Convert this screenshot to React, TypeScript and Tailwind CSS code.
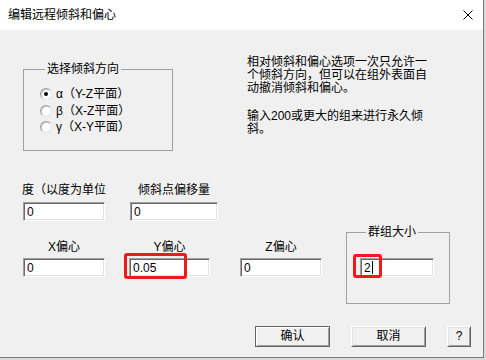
import React from 'react';

const FONT = "font-[family-name:'Liberation_Sans','Noto_Sans_CJK_SC',sans-serif]";

const Field: React.FC<{ value: string; width: string; cursor?: boolean }> = ({ value, width, cursor }) => (
  <div
    className={`flex h-[19px] items-center border border-t-[#a0a0a0] border-l-[#a0a0a0] border-r-white border-b-white bg-white pl-[3px] text-[12px] leading-[14px] text-black shadow-[inset_1px_1px_0_#696969,inset_-1px_-1px_0_#e3e3e3] ${width}`}
  >
    <span>{value}</span>
    {cursor && <span className="ml-[1px] h-[13px] w-[1px] bg-black" />}
  </div>
);

const Radio: React.FC<{ checked?: boolean; label: string }> = ({ checked, label }) => (
  <div className="flex h-[16.5px] items-center">
    <span className="flex h-[12px] w-[12px] items-center justify-center rounded-full border border-t-[#a0a0a0] border-l-[#a0a0a0] border-r-[#e3e3e3] border-b-[#e3e3e3] bg-white shadow-[inset_1px_1px_0_#c8c8c8]">
      {checked && <span className="h-[4px] w-[4px] rounded-full bg-black" />}
    </span>
    <span className="ml-[4px] text-[12px] leading-[14px]">{label}</span>
  </div>
);

const Btn: React.FC<{ children: React.ReactNode; width: string; primary?: boolean }> = ({ children, width, primary }) => (
  <button
    className={
      primary
        ? `h-[21px] ${width} border border-[#646464] bg-[#f0f0f0] text-[12px] leading-[14px] shadow-[inset_1px_1px_0_#fff,inset_-1px_-1px_0_#a0a0a0]`
        : `h-[21px] ${width} border border-t-white border-l-white border-r-[#646464] border-b-[#646464] bg-[#f0f0f0] text-[12px] leading-[14px] shadow-[inset_1px_1px_0_#e3e3e3,inset_-1px_-1px_0_#a0a0a0]`
    }
  >
    {children}
  </button>
);

export default function App() {
  return (
    <div className={`h-[360px] w-[486px] bg-[#d9d9d9] text-black ${FONT}`}>
      <div className="flex h-[358px] w-[484px] flex-col border-r border-b border-[#7a7a7a]">
        {/* title bar */}
        <div className="flex h-[30px] items-center justify-between bg-white pl-[8px] pr-[10px]">
          <span className="text-[12px] leading-[14px]">编辑远程倾斜和偏心</span>
          <svg width="10" height="10" viewBox="0 0 10 10">
            <path d="M0.5 0.5 L9.5 9.5 M9.5 0.5 L0.5 9.5" stroke="#000" strokeWidth="1" />
          </svg>
        </div>

        <div className="flex-1 bg-[#f0f0f0]">
          {/* top */}
          <div className="flex items-start pt-[25px]">
            <fieldset className="ml-[23px] mt-[7px] h-[89px] w-[150px] border border-[#a0a0a0] pl-[16px] pt-[10px]">
              <legend className="ml-[5px] px-[2px] text-[12px] leading-[14px]">选择倾斜方向</legend>
              <Radio checked label="α（Y-Z平面）" />
              <Radio label="β（X-Z平面）" />
              <Radio label="γ（X-Y平面）" />
            </fieldset>
            <div className="ml-[74px] mt-[1px] text-[12px] leading-[13px]">
              <div>相对倾斜和偏心选项一次只允许一</div>
              <div>个倾斜方向，但可以在组外表面自</div>
              <div>动撤消倾斜和偏心。</div>
              <div className="h-[15px]" />
              <div>输入200或更大的组来进行永久倾</div>
              <div>斜。</div>
            </div>
          </div>

          {/* tilt row */}
          <div className="mt-[32px] flex items-start">
            <div className="ml-[23px] flex flex-col">
              <span className="-ml-[1px] mb-[5px] h-[14px] whitespace-nowrap text-[12px] leading-[14px]">度（以度为单位</span>
              <Field value="0" width="w-[82px]" />
            </div>
            <div className="ml-[24px] flex flex-col">
              <span className="mb-[5px] ml-[8px] h-[14px] text-[12px] leading-[14px]">倾斜点偏移量</span>
              <Field value="0" width="w-[88px]" />
            </div>
          </div>

          {/* decenter row */}
          <div className="mt-[4px] flex items-start">
            <div className="ml-[23px] flex flex-col items-center pt-[15px]">
              <span className="mb-[4px] h-[14px] text-[12px] leading-[14px]">X偏心</span>
              <Field value="0" width="w-[82px]" />
            </div>
            <div className="ml-[24px] flex flex-col items-center pt-[15px]">
              <span className="mb-[4px] h-[14px] text-[12px] leading-[14px]">Y偏心</span>
              <div className="relative">
                <Field value="0.05" width="w-[81px]" />
                <div className="absolute top-[-5px] left-[-5px] h-[26px] w-[63px] rounded-[3px] border-[3px] border-[#f01818]" />
              </div>
            </div>
            <div className="ml-[30px] flex flex-col items-center pt-[15px]">
              <span className="mb-[4px] h-[14px] text-[12px] leading-[14px]">Z偏心</span>
              <Field value="0" width="w-[82px]" />
            </div>
            <fieldset className="ml-[24px] h-[79px] w-[104px] border border-[#a0a0a0] pl-[13px] pt-[19px]">
              <legend className="ml-[6px] px-[2px] text-[12px] leading-[14px]">群组大小</legend>
              <div className="relative">
                <Field value="2" width="w-[74px]" cursor />
                <div className="absolute top-[-4px] left-[-7px] h-[24px] w-[29px] rounded-[3px] border-[3px] border-[#f01818]" />
              </div>
            </fieldset>
          </div>

          {/* buttons */}
          <div className="mt-[19px] flex items-center">
            <div className="ml-[255px]">
              <Btn width="w-[75px]" primary>确认</Btn>
            </div>
            <div className="ml-[21px]">
              <Btn width="w-[75px]">取消</Btn>
            </div>
            <div className="ml-[21px]">
              <Btn width="w-[24px]">?</Btn>
            </div>
          </div>
        </div>
      </div>
    </div>
  );
}
